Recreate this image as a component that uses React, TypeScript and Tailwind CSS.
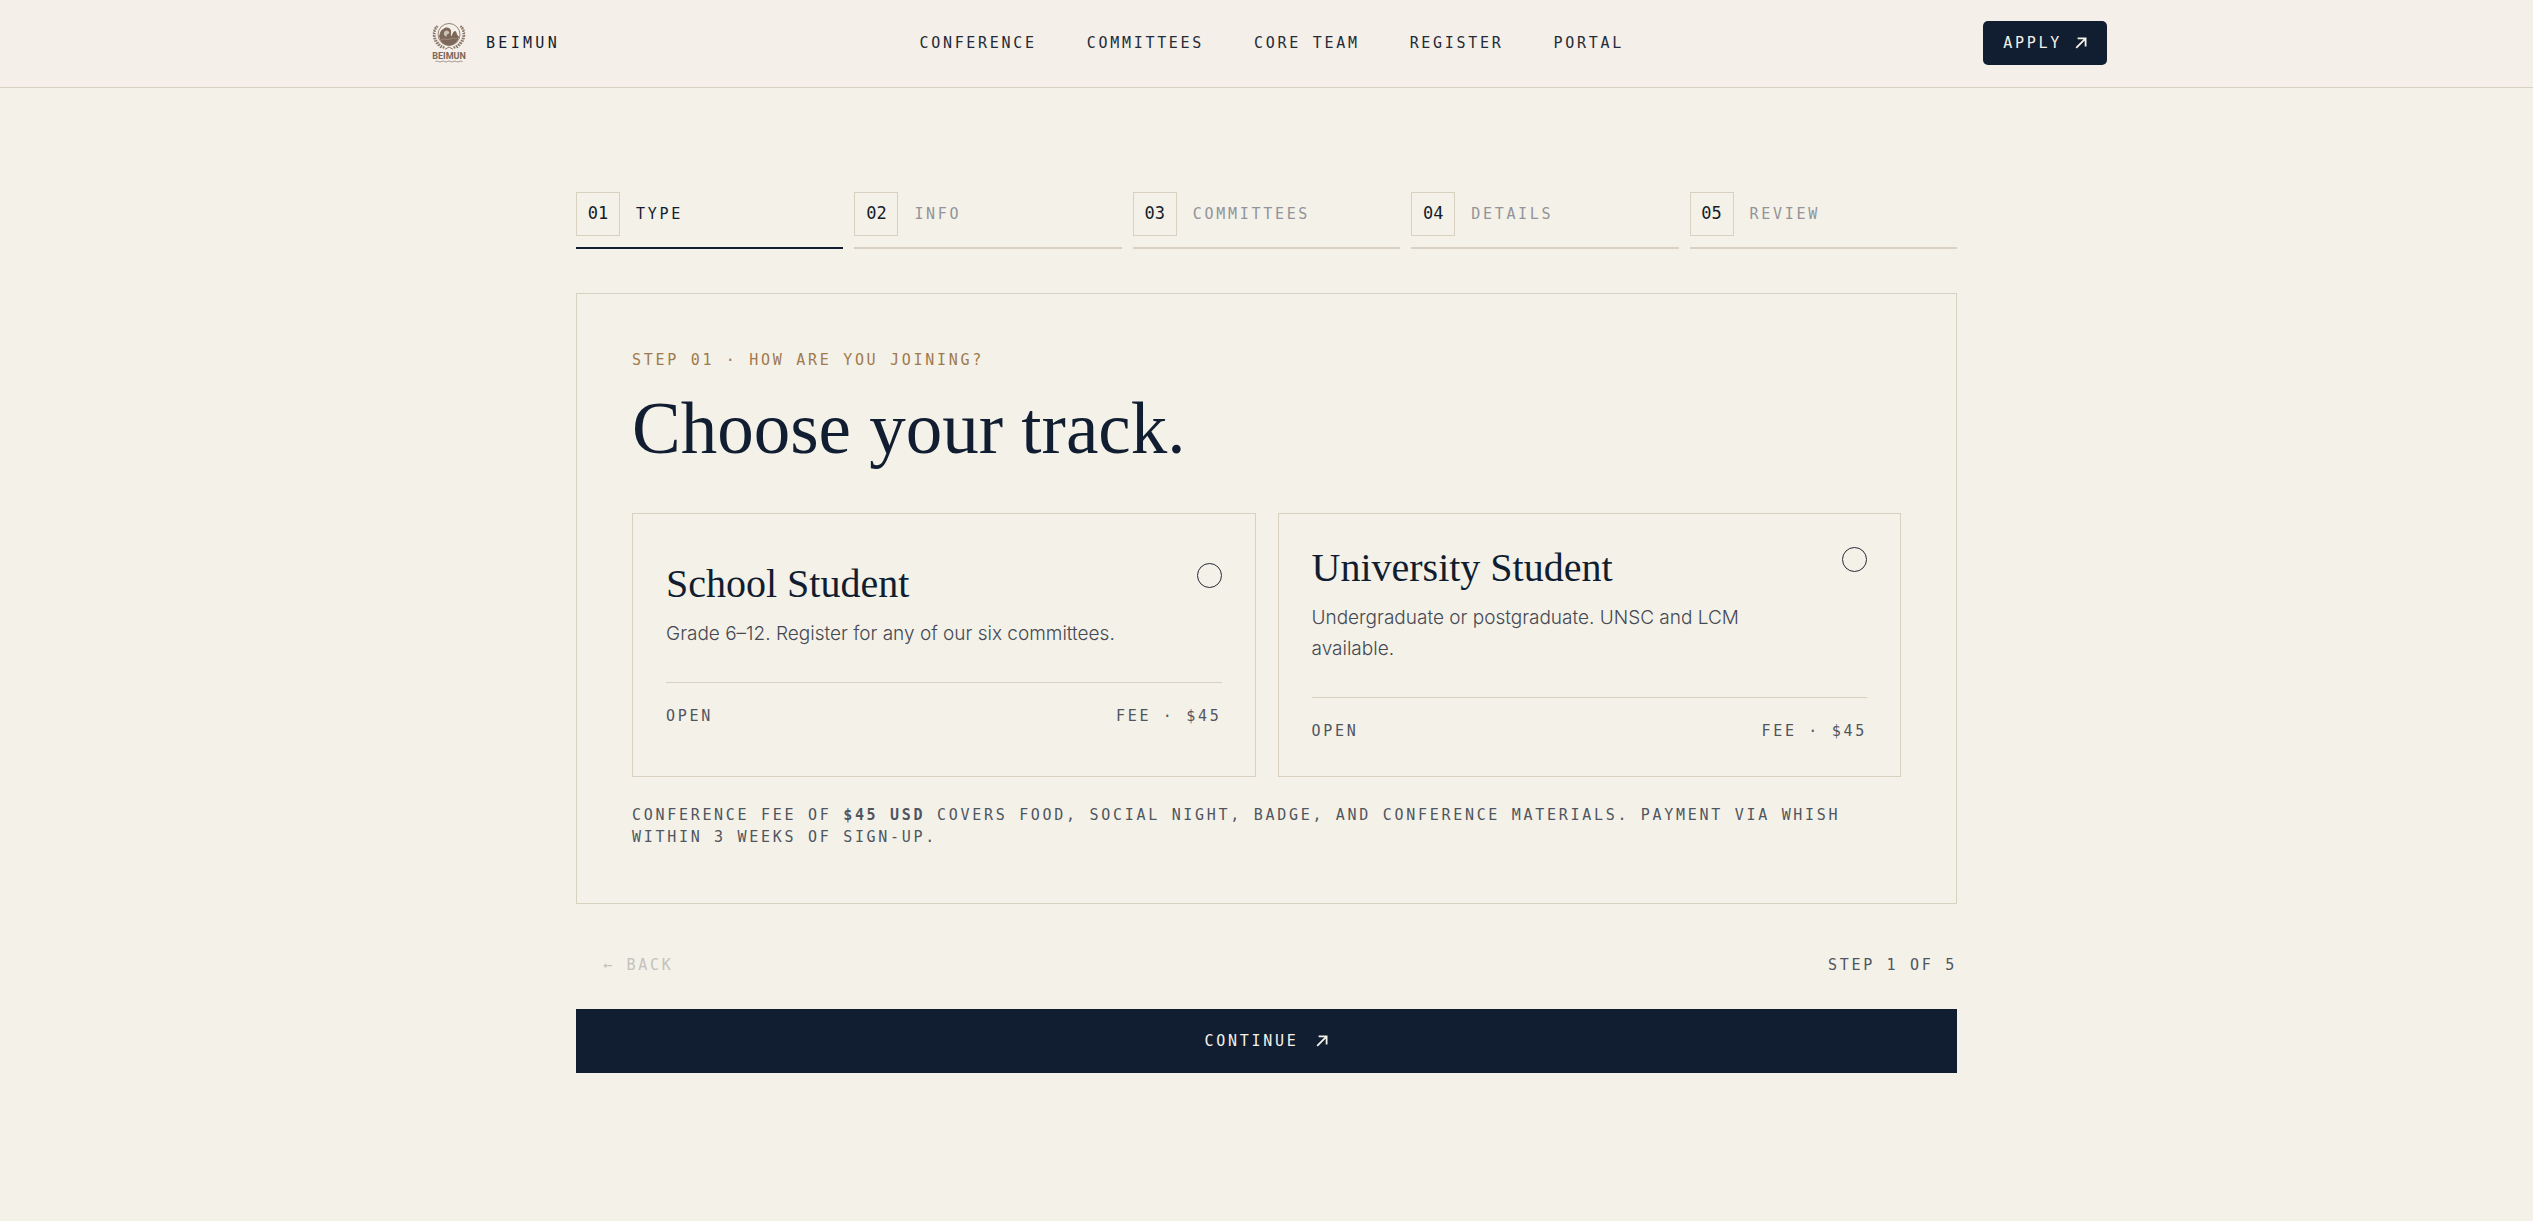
import React, { useState } from "react";

const MONO = "font-['DejaVu_Sans_Mono',monospace] text-[15px] leading-[22px] uppercase";

const NAV = ["Conference", "Committees", "Core Team", "Register", "Portal"];
const STEPS = ["Type", "Info", "Committees", "Details", "Review"];
const TRACKS = [
  { id: "school", title: "School Student", text: "Grade 6–12. Register for any of our six committees." },
  { id: "university", title: "University Student", text: "Undergraduate or postgraduate. UNSC and LCM available." },
];

function Arrow() {
  return (
    <svg viewBox="0 0 12 12" className="size-3 shrink-0" fill="none" stroke="currentColor" strokeWidth="1.8" aria-hidden="true">
      <path d="M1.2 10.8 L10.4 1.6 M2.6 1.4 H10.6 V9.4" />
    </svg>
  );
}

function Logo() {
  return (
    <svg viewBox="0 0 44 44" className="size-11 shrink-0" fill="none" aria-hidden="true">
      <g stroke="#8b7668">
        <circle cx="23" cy="13.5" r="11" strokeWidth="0.9" />
        <path d="M11.5 5 C6 11 7.500 22 19 27 M34.500 5 C40 11 38.500 22 27 27" strokeWidth="2.2" strokeDasharray="1.6 0.9" />
        <path d="M9.500 6 C5.500 13 7 22 15.500 27 M36.500 6 C40.500 13 39 22 30.500 27" strokeWidth="1.3" strokeDasharray="1.5 1.3" />
        <path d="M19 28.300 L23 26 L27 28.300" strokeWidth="1" />
      </g>
      <path
        d="M13 15 C14 13 14 9 17.500 8 C20 5.500 24 6.500 25 9.500 C25.500 12 24.500 13 25 15.500 C26.500 14 27 10 29 10 C31 10.500 30.500 14.500 33 15.500 C32 21 28 24.300 23 24.300 C18 24.300 14 21 13 15 Z"
        fill="#7c6759"
      />
      <path d="M18.500 10.500 C20.500 8.500 23 9.500 23.500 12 C22.500 13 21 12.500 20.500 15.500 C18.500 15.500 17 13 18.500 10.500 Z" fill="#cdc2b8" />
      <path d="M15 18.500 C18 17 21 19.500 24 18 C27 16.500 29 18 31 17.500" stroke="#a79587" strokeWidth="0.8" />
      <text x="23" y="37.500" textAnchor="middle" fill="#7c6759" fontSize="9" fontWeight="700" fontFamily="Roboto, sans-serif">
        BEIMUN
      </text>
      <path d="M9.500 40.500 q1.500 -1 3 0 t3 0 t3 0 t3 0 t3 0 t3 0 t3 0 t3 0 t3 0" stroke="#9c8a7d" strokeWidth="0.9" />
    </svg>
  );
}

export default function App() {
  const [track, setTrack] = useState("");
  return (
    <div className="min-h-screen bg-[#f4f1e8] text-[#111e31]">
      <header className="border-b border-[#d8d1c0] bg-[#f4efe8]">
        <div className="mx-auto flex h-[87px] max-w-[1681px] items-center justify-between pb-px">
          <a href="#home" className="flex items-center gap-4">
            <Logo />
            <span className="font-['DejaVu_Sans_Mono',monospace] text-[15px] leading-[22px] tracking-[0.22em]">BEIMUN</span>
          </a>
          <nav className="flex gap-[50px]">
            {NAV.map((item) => (
              <a key={item} href="#nav" className={`${MONO} tracking-[0.18em] text-[#252b38]`}>
                {item}
              </a>
            ))}
          </nav>
          <a
            href="#apply"
            className={`${MONO} flex h-11 items-center gap-[13px] rounded-[5px] bg-[#111e31] px-5 tracking-[0.18em] text-[#f4f1e8]`}
          >
            Apply
            <Arrow />
          </a>
        </div>
      </header>

      <main className="mx-auto max-w-[1381px] pt-[104px] pb-[148px]">
        <ol className="grid grid-cols-5 gap-[11px]">
          {STEPS.map((step, i) => (
            <li
              key={step}
              className={`flex items-center gap-4 border-b-2 pb-[11px] ${i === 0 ? "border-[#111e31]" : "border-[#d8d1c4]"}`}
            >
              <span className="flex size-11 items-center justify-center border border-[#d8d1c0] font-['DejaVu_Sans_Mono',monospace] text-[17px] text-[#151c2a]">
                {`0${i + 1}`}
              </span>
              <span className={`${MONO} tracking-[0.18em] ${i === 0 ? "text-[#111e31]" : "text-[#92949a]"}`}>{step}</span>
            </li>
          ))}
        </ol>

        <section className="mt-11 border border-[#d6d2c0] p-[55px]">
          <p className={`${MONO} tracking-[0.18em] text-[#a07a4e]`}>Step 01 · How are you joining?</p>
          <h1 className="mt-[22px] font-['Liberation_Serif',serif] text-[73px] leading-[72px]">Choose your track.</h1>

          <div className="mt-12 grid grid-cols-2 gap-[22px]">
            {TRACKS.map((t) => (
              <label key={t.id} className="flex cursor-pointer flex-col justify-center border border-[#d8d1c0] p-[33px]">
                <span className="flex items-start justify-between">
                  <span className="block max-w-[460px]">
                    <span className="block font-['Liberation_Serif',serif] text-[40px] leading-[42px]">{t.title}</span>
                    <span className="mt-[13px] block font-['Inter',sans-serif] text-[19px] leading-[31px] font-light text-[#454953]">
                      {t.text}
                    </span>
                  </span>
                  <input
                    type="radio"
                    name="track"
                    value={t.id}
                    checked={track === t.id}
                    onChange={() => setTrack(t.id)}
                    className="size-[25px] shrink-0 appearance-none rounded-full border border-[#252b38] checked:bg-[#111e31]"
                  />
                </span>
                <span
                  className={`${MONO} mt-[33px] flex justify-between border-t border-[#d8d1c0] pt-[22px] pb-px tracking-[0.18em] text-[#50565f]`}
                >
                  <span>Open</span>
                  <span>Fee · $45</span>
                </span>
              </label>
            ))}
          </div>

          <p className={`${MONO} mt-[27px] tracking-[0.18em] text-[#50565f]`}>
            Conference fee of <strong>$45 USD</strong> covers food, social night, badge, and conference materials. Payment
            via Whish within 3 weeks of sign-up.
          </p>
        </section>

        <div className="mt-[33px] flex h-14 items-center justify-between">
          <button type="button" disabled className={`${MONO} px-[27px] tracking-[0.18em] text-[#c4c1bc]`}>
            ← Back
          </button>
          <span className={`${MONO} tracking-[0.18em] text-[#50565f]`}>Step 1 of 5</span>
        </div>
        <button
          type="button"
          className={`${MONO} mt-4 flex h-16 w-full items-center justify-center gap-[18px] bg-[#111e31] tracking-[0.18em] text-[#f4f1e8]`}
        >
          Continue
          <Arrow />
        </button>
      </main>
    </div>
  );
}
